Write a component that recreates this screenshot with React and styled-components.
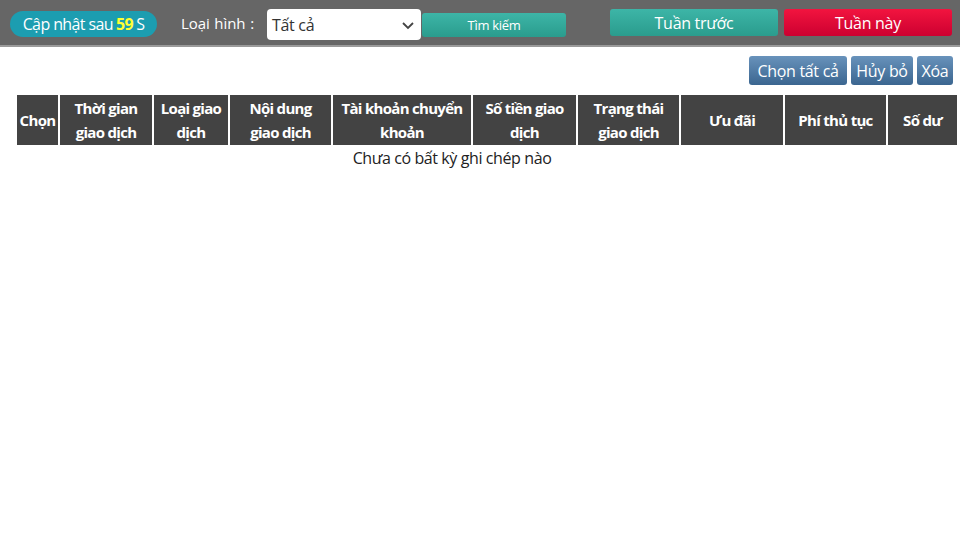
import React from "react";
import styled, { createGlobalStyle } from "styled-components";

const Global = createGlobalStyle`
  html, body { margin: 0; padding: 0; background: #fff; }
  body { font-family: "Open Sans", "Noto Sans", sans-serif; }
`;

const TopBar = styled.div`
  height: 45px;
  background: #666;
  border-bottom: 2px solid #9a9a9a;
  display: flex;
  align-items: flex-start;
  padding: 0 8px 0 10px;
  box-sizing: content-box;
`;

const Countdown = styled.div`
  margin-top: 11px;
  height: 26px;
  width: 147px;
  border-radius: 13px;
  background: #1c9db0;
  color: #fff;
  font-size: 16px;
  letter-spacing: -0.6px;
  display: flex;
  align-items: center;
  justify-content: center;
  box-sizing: border-box;
  b { color: #ffff33; font-weight: 700; margin: 0 3px; }
`;

const Label = styled.span`
  margin-top: 13px;
  color: #fff;
  font-size: 15px;
  margin-left: 24px;
  margin-right: 13px;
  letter-spacing: -0.1px;
  word-spacing: 1px;
`;

const Select = styled.div`
  margin-top: 9px;
  width: 154px;
  height: 31px;
  background: #fff;
  border-radius: 4px;
  display: flex;
  align-items: center;
  justify-content: space-between;
  padding: 0 6px 0 5px;
  box-sizing: border-box;
  font-size: 16px;
  color: #333;
  letter-spacing: -0.3px;
`;

const Btn = styled.button`
  border: none;
  color: #fff;
  font-family: inherit;
  padding: 0;
  display: flex;
  align-items: center;
  justify-content: center;
  cursor: pointer;
  width: ${(p) => p.$w}px;
  height: ${(p) => p.$h}px;
  font-size: ${(p) => p.$fs}px;
  margin-left: ${(p) => p.$ml || 0}px;
  margin-top: ${(p) => p.$mt || 0}px;
  border-radius: 3px;
  letter-spacing: -0.3px;
  background: ${(p) =>
    p.$kind === "red"
      ? "linear-gradient(#f2143f, #cc0030)"
      : p.$kind === "blue"
      ? "linear-gradient(#6892bb, #3b6690)"
      : "linear-gradient(#3db5a7, #2a9c8d)"};
`;

const Spacer = styled.div`
  flex: 1;
`;

const Actions = styled.div`
  display: flex;
  justify-content: flex-end;
  gap: 4px;
  padding: 9px 7px 0 0;
`;

const Table = styled.table`
  margin: 10px 0 0 17px;
  width: 940px;
  border-collapse: collapse;
  table-layout: fixed;
`;

const Th = styled.th`
  background: #434343;
  color: #fff;
  font-weight: 700;
  font-size: 15px;
  letter-spacing: -0.7px;
  line-height: 24px;
  height: 50px;
  padding: 0 2px;
  border-left: 2px solid #fff;
  text-align: center;
  vertical-align: middle;
  white-space: nowrap;
  &:first-child { border-left: none; }
`;

const Empty = styled.td`
  text-align: center;
  font-size: 16px;
  color: #222;
  letter-spacing: -0.4px;
  padding: 2px 0;
`;

const cols = [
  { t: ["Chọn"], w: 42 },
  { t: ["Thời gian", "giao dịch"], w: 94 },
  { t: ["Loại giao", "dịch"], w: 76 },
  { t: ["Nội dung", "giao dịch"], w: 103 },
  { t: ["Tài khoản chuyển", "khoản"], w: 140 },
  { t: ["Số tiền giao", "dịch"], w: 105 },
  { t: ["Trạng thái", "giao dịch"], w: 103 },
  { t: ["Ưu đãi"], w: 104 },
  { t: ["Phí thủ tục"], w: 103 },
  { t: ["Số dư"], w: 70 },
];

const Chevron = () => (
  <svg width="14" height="14" viewBox="0 0 14 14">
    <path d="M2 5 L7 10 L12 5" fill="none" stroke="#444" strokeWidth="1.8" />
  </svg>
);

export default function App() {
  return (
    <>
      <Global />
      <TopBar>
        <Countdown>
          Cập nhật sau<b>59</b>S
        </Countdown>
        <Label>Loại hình :</Label>
        <Select>
          <span>Tất cả</span>
          <Chevron />
        </Select>
        <Btn $w={144} $h={24} $fs={13} $ml={1} $mt={13}>
          Tìm kiếm
        </Btn>
        <Spacer />
        <Btn $w={168} $h={27} $fs={16} $mt={9}>
          Tuần trước
        </Btn>
        <Btn $w={168} $h={27} $fs={16} $ml={6} $mt={9} $kind="red">
          Tuần này
        </Btn>
      </TopBar>
      <Actions>
        <Btn $w={98} $h={29} $fs={16} $kind="blue">
          Chọn tất cả
        </Btn>
        <Btn $w={62} $h={29} $fs={16} $kind="blue">
          Hủy bỏ
        </Btn>
        <Btn $w={36} $h={29} $fs={16} $kind="blue">
          Xóa
        </Btn>
      </Actions>
      <Table>
        <colgroup>
          {cols.map((c) => (
            <col key={c.t.join()} style={{ width: c.w }} />
          ))}
        </colgroup>
        <thead>
          <tr>
            {cols.map((c) => (
              <Th key={c.t.join()}>
                {c.t.map((line, i) => (
                  <React.Fragment key={i}>
                    {i > 0 && <br />}
                    {line}
                  </React.Fragment>
                ))}
              </Th>
            ))}
          </tr>
        </thead>
        <tbody>
          <tr>
            <Empty colSpan={9}>Chưa có bất kỳ ghi chép nào</Empty>
            <td />
          </tr>
        </tbody>
      </Table>
    </>
  );
}
